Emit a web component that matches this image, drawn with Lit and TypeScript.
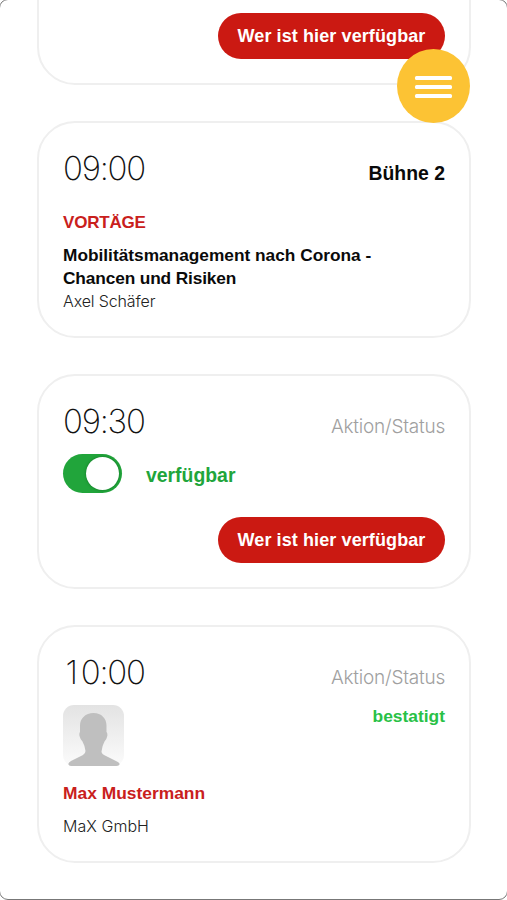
import { LitElement, html, css, svg } from "lit";
import { customElement, property } from "lit/decorators.js";
import { classMap } from "lit/directives/class-map.js";

@customElement("pill-button")
class PillButton extends LitElement {
  static styles = css`
    :host { display: block; }
    button {
      display: block;
      width: 227px;
      height: 46px;
      padding: 0;
      border: 0;
      border-radius: 23px;
      background: #cb1912;
      color: #fff;
      font: bold 18px/46px "Liberation Sans", sans-serif;
      letter-spacing: 0.1px;
      text-align: center;
    }
  `;
  render() {
    return html`<button><slot></slot></button>`;
  }
}

@customElement("toggle-switch")
class ToggleSwitch extends LitElement {
  static styles = css`
    :host { display: block; }
    .track {
      box-sizing: border-box;
      display: flex;
      justify-content: flex-end;
      align-items: center;
      width: 59px;
      height: 39px;
      padding-right: 3px;
      border-radius: 20px;
      background: #21a53b;
    }
    .knob {
      width: 33px;
      height: 33px;
      border-radius: 50%;
      background: #fff;
      box-shadow: 0 0 3px rgba(0, 70, 15, 0.5);
    }
  `;
  render() {
    return html`<div class="track" role="switch" aria-checked="true"><div class="knob"></div></div>`;
  }
}

@customElement("time-slot")
class TimeSlot extends LitElement {
  @property() time = "";
  @property() label = "";
  @property() kind = "muted";

  static styles = css`
    :host {
      box-sizing: border-box;
      display: flex;
      flex-direction: column;
      border: 2px solid #efefef;
      border-radius: 38px;
      padding: 24px 24px 0;
      background: #fff;
    }
    .head {
      display: flex;
      justify-content: space-between;
      align-items: baseline;
      height: 43px;
      white-space: nowrap;
    }
    .time {
      font: 250 33px/42px Inter, sans-serif;
      letter-spacing: -1.25px;
      color: #111;
    }
    /* the narrow 1 takes the advance of the other digits */
    .narrow { padding: 0 4px 0 2.5px; }
    .muted {
      font: 300 19px/24px Inter, sans-serif;
      letter-spacing: -0.22px;
      color: #a0a0a0;
    }
    .place {
      font: bold 19.4px/24px "Liberation Sans", sans-serif;
      color: #0a0a0a;
    }
  `;
  render() {
    const first = this.time.slice(0, 1);
    return html`
      ${this.time
        ? html`<div class="head">
            <span class="time"><span class=${classMap({ narrow: first === "1" })}>${first}</span>${this.time.slice(1)}</span>
            <span class=${this.kind}>${this.label}</span>
          </div>`
        : ""}
      <slot></slot>
    `;
  }
}

@customElement("app-root")
class AppRoot extends LitElement {
  static styles = css`
    :host {
      position: relative;
      display: block;
      width: 507px;
      height: 900px;
      overflow: hidden;
      background: #fff;
      font-family: "Liberation Sans", sans-serif;
    }
    .list {
      display: flex;
      flex-direction: column;
      gap: 36px;
      padding: 0 36px 0 37px;
    }
    .previous { height: 137px; margin-top: -52px; padding-top: 63px; }
    .talk { height: 217px; }
    .open { height: 215px; }
    .booked { height: 238px; }
    pill-button { align-self: flex-end; }
    .topic, .title, .name, .state, .confirmed {
      font-weight: bold;
      white-space: nowrap;
    }
    .topic {
      margin-top: 21px;
      font-size: 17px;
      line-height: 24px;
      letter-spacing: -0.2px;
      color: #c9201c;
    }
    .title {
      margin-top: 9px;
      font-size: 17.3px;
      line-height: 23px;
      color: #0a0a0a;
    }
    .title .end { letter-spacing: -0.13px; }
    .speaker, .company {
      font: 300 16px/23px Inter, sans-serif;
      letter-spacing: -0.13px;
      color: #222;
    }
    .availability {
      display: flex;
      align-items: center;
      gap: 24px;
      margin: 10.5px 0 24.5px;
    }
    .state {
      padding-top: 4px;
      font-size: 19.4px;
      line-height: 24px;
      color: #21a53b;
    }
    .row {
      display: flex;
      justify-content: space-between;
      align-items: flex-start;
      margin-top: 11px;
    }
    .avatar { display: block; width: 61px; height: 61px; }
    .confirmed {
      font-size: 17.4px;
      line-height: 23px;
      color: #28c146;
    }
    .name {
      margin-top: 16px;
      font-size: 17.4px;
      line-height: 23px;
      color: #c9201c;
    }
    .company { margin-top: 10px; letter-spacing: 0.05px; }
    .menu {
      position: absolute;
      top: 49px;
      right: 37px;
      display: flex;
      flex-direction: column;
      align-items: center;
      justify-content: center;
      gap: 5px;
      width: 73px;
      height: 74px;
      padding: 1px 0 0;
      border: 0;
      border-radius: 50%;
      background: #fcc334;
    }
    .bar {
      width: 37px;
      height: 4px;
      border-radius: 1.5px;
      background: #fff;
    }
    .frame {
      position: absolute;
      inset: -1px -1px 0;
      border: 1px solid #777;
      border-radius: 9px;
      pointer-events: none;
    }
  `;

  private avatar() {
    return html`<svg class="avatar" viewBox="0 0 61 61">
      ${svg`<defs>
        <linearGradient id="tile" x1="0" y1="0" x2="0" y2="1">
          <stop offset="0" stop-color="#e3e3e3" />
          <stop offset="1" stop-color="#fbfbfb" />
        </linearGradient>
      </defs>
      <rect width="61" height="61" rx="11" fill="url(#tile)" />
      <path fill="#bfbfbf" d="M30.500 8C22.500 8 17 13.500 17 20.500L17 27Q16 28 16.500 31Q17.500 35 19.500 36.500Q22 41 22.500 46Q22.500 48.500 20 50Q15 52.500 8 56Q5 57.800 5.500 59.500Q6 61 10 61L51 61Q56 61 56.500 59.500Q57 58 54 56.500L43 51Q38.500 49 38.500 46.500Q39 41 41.500 36.500Q43.500 35 44.300 31Q44.700 28 43.500 27L43.500 20.500C43.500 13.500 38.500 8 30.500 8Z" />`}
    </svg>`;
  }

  render() {
    return html`
      <div class="list">
        <time-slot class="previous"><pill-button>Wer ist hier verfügbar</pill-button></time-slot>

        <time-slot class="talk" time="09:00" label="Bühne 2" kind="place">
          <div class="topic">VORTÄGE</div>
          <div class="title">Mobilitätsmanagement nach Corona -<br /><span class="end">Chancen und Risiken</span></div>
          <div class="speaker">Axel Schäfer</div>
        </time-slot>

        <time-slot class="open" time="09:30" label="Aktion/Status">
          <div class="availability">
            <toggle-switch></toggle-switch>
            <span class="state">verfügbar</span>
          </div>
          <pill-button>Wer ist hier verfügbar</pill-button>
        </time-slot>

        <time-slot class="booked" time="10:00" label="Aktion/Status">
          <div class="row">
            ${this.avatar()}
            <span class="confirmed">bestatigt</span>
          </div>
          <div class="name">Max Mustermann</div>
          <div class="company">MaX GmbH</div>
        </time-slot>
      </div>
      <button class="menu" aria-label="Menü">
        <span class="bar"></span><span class="bar"></span><span class="bar"></span>
      </button>
      <div class="frame"></div>
    `;
  }
}
